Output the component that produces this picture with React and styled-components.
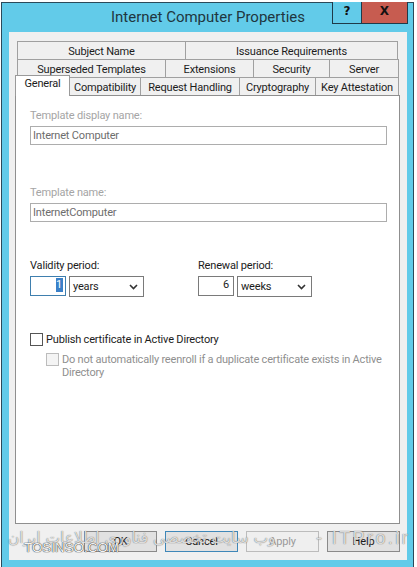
import styled, { createGlobalStyle } from "styled-components";

const GlobalStyle = createGlobalStyle`
  html, body {
    margin: 0;
    padding: 0;
    background: #fff;
  }
  body {
    font-family: Roboto, "Noto Sans", sans-serif;
    font-size: 11px;
    letter-spacing: -0.18px;
    color: #1c1c1c;
  }
`;

const Page = styled.div`
  position: relative;
  width: 417px;
  height: 567px;
  padding: 2px 3px 0 1px;
  box-sizing: border-box;
  overflow: hidden;
`;

const Win = styled.div`
  height: 100%;
  box-sizing: border-box;
  background: #62cbe9;
  border: 1px solid #2b4a5a;
  border-bottom: none;
  padding: 0 6px 7px 7px;
  display: flex;
  flex-direction: column;
`;

const TitleBar = styled.div`
  position: relative;
  height: 29px;
  flex: none;
  display: flex;
  align-items: center;
  justify-content: center;
  font-size: 15px;
  letter-spacing: 0;
  color: #1f3640;
  padding-bottom: 1px;
  box-sizing: border-box;
`;

const Caption = styled.div`
  position: absolute;
  top: -1px;
  right: -1px;
  display: flex;
  height: 21px;
  border: 1px solid #1f3a48;
  border-top: none;
`;

const CaptionBtn = styled.div`
  width: ${(p) => p.$w}px;
  background: ${(p) => p.$bg};
  border-left: ${(p) => (p.$line ? "1px solid #1f3a48" : "none")};
  display: flex;
  align-items: center;
  justify-content: center;
  font-family: "DejaVu Sans", sans-serif;
  font-weight: 700;
  font-size: 12px;
  color: #101010;
  padding-bottom: 3px;
  box-sizing: border-box;
`;

const Client = styled.div`
  flex: 1;
  background: #f0f0f0;
  padding: 9px 7px 8px 6px;
  display: flex;
  flex-direction: column;
  min-height: 0;
`;

const TabRow = styled.div`
  display: flex;
  height: 18px;
  margin: 0 2px;
`;

const Tab = styled.div`
  width: ${(p) => p.$w}px;
  box-sizing: border-box;
  flex: none;
  background: #f0f0f0;
  border: 1px solid #a0a0a0;
  border-bottom: none;
  margin-right: -1px;
  padding-top: 2px;
  display: flex;
  align-items: center;
  justify-content: center;
  white-space: nowrap;
`;

const FrontRow = styled.div`
  display: flex;
  align-items: flex-end;
  height: 18px;
  padding-right: 2px;
`;

const ActiveTab = styled(Tab)`
  position: relative;
  height: 21px;
  background: #fff;
  z-index: 1;
  margin-bottom: -1px;
  padding: 0 0 5px;
  border-color: #9a9a9a;
`;

const BackTab = styled(Tab)`
  height: 18px;
`;

const Panel = styled.div`
  flex: 1;
  background: #fff;
  border: 1px solid #8f8f8f;
  padding: 11px 12px 0 14px;
  display: flex;
  flex-direction: column;
  min-height: 0;
`;

const Label = styled.div`
  height: 15px;
  line-height: ${(p) => (p.$off ? 17 : 15)}px;
  color: ${(p) => (p.$off ? "#a5a5a5" : "#1c1c1c")};
`;

const NameField = styled.div`
  height: 19px;
  margin-top: 4px;
  margin-bottom: ${(p) => p.$mb}px;
  border: 1px solid #adadad;
  box-sizing: border-box;
  padding-left: 2px;
  line-height: 18px;
  color: #6d6d6d;
`;

const Periods = styled.div`
  display: flex;
  gap: 54px;
  margin-top: 36px;
`;

const Period = styled.div`
  display: flex;
  flex-direction: column;
  gap: 3px;
`;

const PeriodInputs = styled.div`
  display: flex;
  gap: 3px;
`;

const NumBox = styled.div`
  width: 36px;
  height: 20px;
  box-sizing: border-box;
  border: 1px solid ${(p) => (p.$focus ? "#3f7fae" : "#7a7a7a")};
  text-align: right;
  padding-right: ${(p) => (p.$focus ? 2 : 4)}px;
  line-height: 16px;
`;

const Selected = styled.span`
  display: inline-block;
  background: #3a80c8;
  color: #fff;
  height: 14px;
  line-height: 14px;
  padding: 0 1px 0 0;
  margin-top: 1px;
  vertical-align: top;
`;

const Combo = styled.div`
  width: 75px;
  height: 21px;
  box-sizing: border-box;
  border: 1px solid #7a7a7a;
  display: flex;
  align-items: center;
  justify-content: space-between;
  padding: 0 5px 0 3px;
`;

const Check = styled.div`
  width: 13px;
  height: 13px;
  flex: none;
  box-sizing: border-box;
  border: 1px solid ${(p) => (p.$off ? "#bcbcbc" : "#555")};
  background: ${(p) => (p.$off ? "#f4f4f4" : "#fff")};
`;

const CheckRow = styled.div`
  display: flex;
  gap: 3px;
  align-items: ${(p) => (p.$top ? "flex-start" : "center")};
  margin-top: ${(p) => p.$mt}px;
  margin-left: ${(p) => p.$ml || 0}px;
`;

const CheckText = styled.div`
  line-height: 13px;
  letter-spacing: ${(p) => (p.$off ? "-0.2px" : "-0.18px")};
  color: ${(p) => (p.$off ? "#8f8f8f" : "#1c1c1c")};
`;

const Buttons = styled.div`
  display: flex;
  justify-content: flex-end;
  gap: 8px;
  margin-top: 7px;
`;

const Btn = styled.div`
  width: 73px;
  height: 21px;
  box-sizing: border-box;
  background: ${(p) => (p.$off ? "#efefef" : "#e1e1e1")};
  border: 1px solid ${(p) => (p.$focus ? "#3f87b8" : p.$off ? "#bcbcbc" : "#8a8a8a")};
  display: flex;
  align-items: center;
  justify-content: center;
  color: ${(p) => (p.$off ? "#9a9a9a" : "#1c1c1c")};
`;

const Watermark = styled.div`
  position: absolute;
  left: 8px;
  top: 525px;
  width: 402px;
  height: 26px;
  display: flex;
  align-items: center;
  justify-content: space-between;
  white-space: nowrap;
  font-family: "DejaVu Sans", sans-serif;
  letter-spacing: 0;
  color: rgba(255, 255, 255, 0.78);
  text-shadow: 0 0 1px rgba(60, 60, 60, 0.95);
  pointer-events: none;
`;

const MarkFa = styled.span`
  direction: rtl;
  font-size: 15.4px;
`;

const MarkEn = styled.span`
  font-family: "Liberation Sans", sans-serif;
  font-size: 18px;
  letter-spacing: 2.4px;
`;

const SiteMark = styled.div`
  position: absolute;
  left: 24px;
  top: 540px;
  font-family: "Liberation Sans", sans-serif;
  font-size: 13.4px;
  letter-spacing: 0;
  color: #f4f4f4;
  text-shadow: 0 0 1px #222, 0 0 1px #222;
  pointer-events: none;
`;

const Chevron = () => (
  <svg width="9" height="6" viewBox="0 0 9 6">
    <path d="M1 1l3.5 3.5L8 1" fill="none" stroke="#333" strokeWidth="1.6" />
  </svg>
);

const App = () => {
  return (
    <Page>
      <GlobalStyle />
      <Win>
        <TitleBar>
          Internet Computer Properties
          <Caption>
            <CaptionBtn $w={28} $bg="#62cbe9">?</CaptionBtn>
            <CaptionBtn $w={46} $bg="#c75c50" $line>X</CaptionBtn>
          </Caption>
        </TitleBar>
        <Client>
          <TabRow>
            <Tab $w={169}>Subject Name</Tab>
            <Tab $w={213}>Issuance Requirements</Tab>
          </TabRow>
          <TabRow>
            <Tab $w={149}>Superseded Templates</Tab>
            <Tab $w={89}>Extensions</Tab>
            <Tab $w={77}>Security</Tab>
            <Tab $w={70}>Server</Tab>
          </TabRow>
          <FrontRow>
            <ActiveTab $w={55}>General</ActiveTab>
            <BackTab $w={72}>Compatibility</BackTab>
            <BackTab $w={100}>Request Handling</BackTab>
            <BackTab $w={77}>Cryptography</BackTab>
            <BackTab $w={84}>Key Attestation</BackTab>
          </FrontRow>
          <Panel>
            <Label $off>Template display name:</Label>
            <NameField $mb={39}>Internet Computer</NameField>
            <Label $off>Template name:</Label>
            <NameField $mb={0}>InternetComputer</NameField>
            <Periods>
              <Period>
                <Label>Validity period:</Label>
                <PeriodInputs>
                  <NumBox $focus><Selected>1</Selected></NumBox>
                  <Combo>years<Chevron /></Combo>
                </PeriodInputs>
              </Period>
              <Period>
                <Label>Renewal period:</Label>
                <PeriodInputs>
                  <NumBox>6</NumBox>
                  <Combo>weeks<Chevron /></Combo>
                </PeriodInputs>
              </Period>
            </Periods>
            <CheckRow $mt={36}>
              <Check />
              <CheckText>Publish certificate in Active Directory</CheckText>
            </CheckRow>
            <CheckRow $mt={7} $ml={16} $top>
              <Check $off />
              <CheckText $off>
                Do not automatically reenroll if a duplicate certificate exists in Active Directory
              </CheckText>
            </CheckRow>
          </Panel>
          <Buttons>
            <Btn>OK</Btn>
            <Btn $focus>Cancel</Btn>
            <Btn $off>Apply</Btn>
            <Btn>Help</Btn>
          </Buttons>
        </Client>
      </Win>
      <Watermark>
        <MarkFa>وب سایت تخصصی فناوری اطلاعات ایران</MarkFa>
        <MarkEn>- ITPro.ir</MarkEn>
      </Watermark>
      <SiteMark>TOSINSO.COM</SiteMark>
    </Page>
  );
};

export default App;
